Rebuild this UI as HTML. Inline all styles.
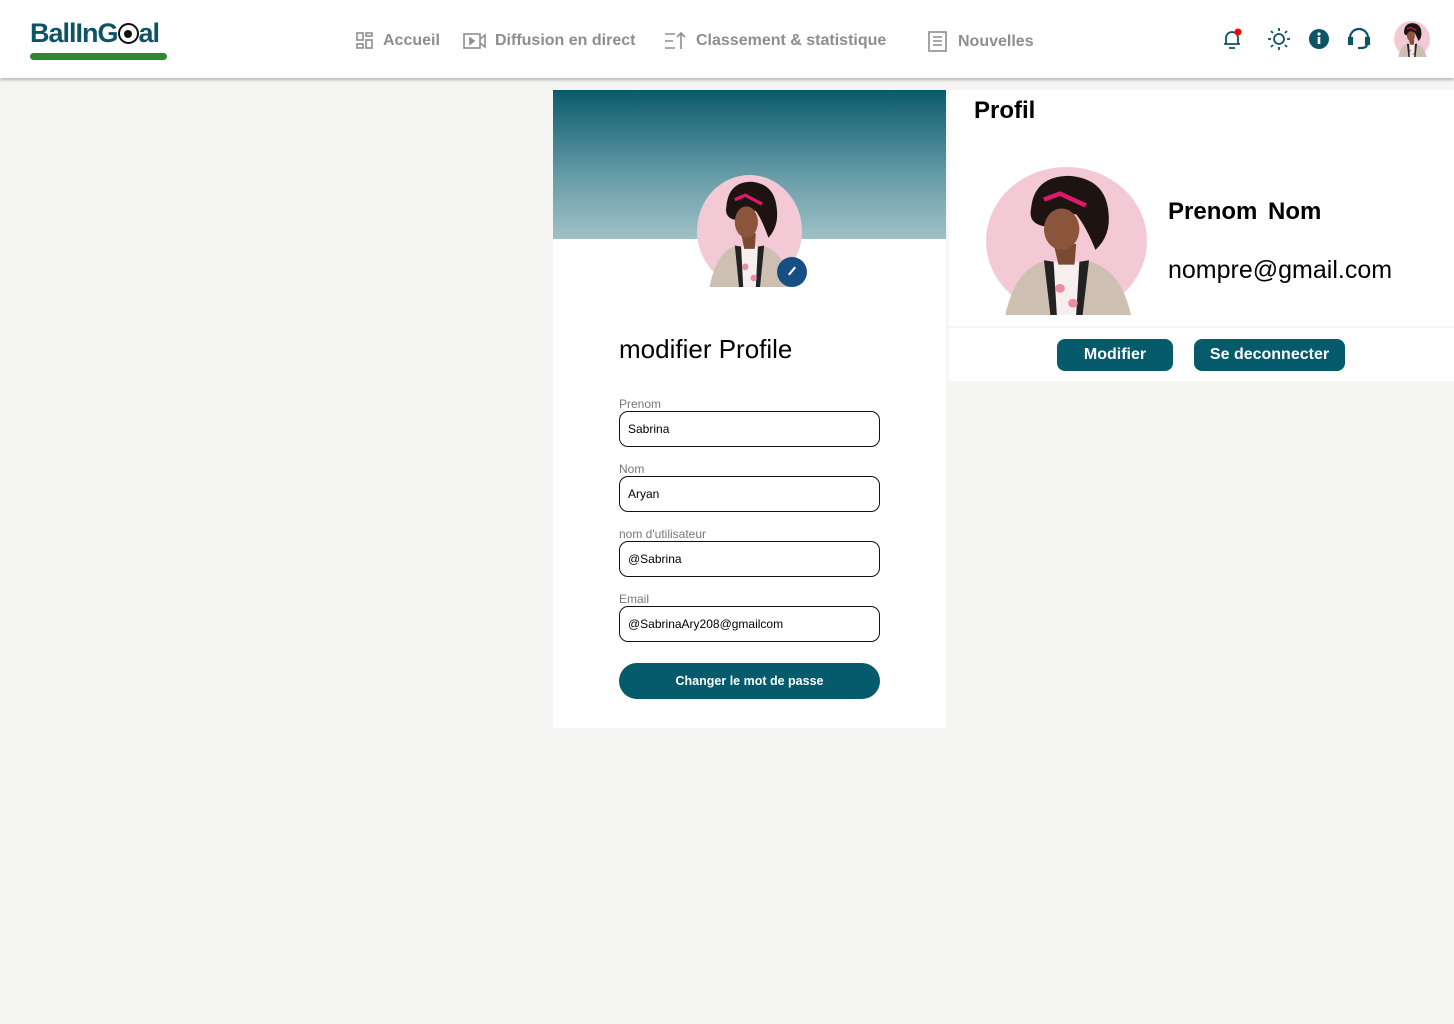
<!DOCTYPE html>
<html><head><meta charset="utf-8"><style>
*{margin:0;padding:0;box-sizing:border-box}
body{width:1454px;height:1024px;background:#f5f5f3;font-family:"Liberation Sans",sans-serif;position:relative;overflow:hidden}
.hdr{position:absolute;left:0;top:0;width:1454px;height:78px;background:#fff;box-shadow:0 2px 3px rgba(0,0,0,.25)}
.logo{position:absolute;left:30px;top:18px;font-size:27px;font-weight:bold;color:#0d5466;letter-spacing:-1px}
.bar{position:absolute;left:30px;top:53px;width:137px;height:7px;border-radius:4px;background:#2b8a2b}
.nav{position:absolute;top:31px;font-size:16px;font-weight:bold;color:#8e8e8e;display:flex;align-items:center;gap:8px}
.abs{position:absolute}
.lbl{position:absolute;left:619px;font-size:12px;color:#777}
.inp{position:absolute;left:619px;width:261px;height:36px;border:1.3px solid #111;border-radius:9px;font-size:12px;color:#000;padding:10px 0 0 8px}
.btn{position:absolute;background:#055a6b;color:#fff;font-weight:bold;text-align:center}
</style></head><body>
<svg width="0" height="0" style="position:absolute"><defs>
<symbol id="av" viewBox="0 0 100 100" preserveAspectRatio="none">
<circle cx="50" cy="50" r="50" fill="#f4c9d6"/>
<path d="M12 100 Q18 70 35 64 L65 64 Q84 70 90 100Z" fill="#cdbfb2"/>
<path d="M38 64 L62 64 L58 100 L42 100Z" fill="#f7eef0"/>
<path d="M36 63 L42 64 L44 100 L40 100Z M64 63 L58 64 L56 100 L60 100Z" fill="#222"/>
<circle cx="46" cy="82" r="3" fill="#e88fa3"/><circle cx="54" cy="92" r="3" fill="#e88fa3"/>
<path d="M42 52 L56 52 L55 66 L45 66Z" fill="#7a4a33"/>
<path d="M28 28 Q30 6 52 6 Q74 8 76 30 Q78 46 68 56 Q62 40 56 32 Q44 30 36 40 Q26 38 28 28Z" fill="#1d1412"/>
<ellipse cx="47" cy="42" rx="11" ry="14" fill="#8a553b"/>
<path d="M36 22 L46 18 L62 26" stroke="#e0186b" stroke-width="3" fill="none"/>
</symbol></defs></svg>

<div class="hdr">
<div class="logo">BallInG<span style="display:inline-block;width:21px;height:21px;border-radius:50%;background:#fff;border:2px solid #111;vertical-align:-2px;position:relative"><span style="position:absolute;left:4.5px;top:4.5px;width:8px;height:8px;background:#111;border-radius:50%"></span></span>al</div>
<div class="bar"></div>
<div class="nav" style="left:355px"><svg width="20" height="20" viewBox="0 0 20 20" fill="none" stroke="#8e8e8e" stroke-width="1.6"><rect x="2" y="2" width="6" height="7"/><rect x="11" y="2" width="6" height="3"/><rect x="2" y="13" width="6" height="4"/><rect x="11" y="9" width="6" height="8"/></svg>Accueil</div>
<div class="nav" style="left:463px"><svg width="24" height="20" viewBox="0 0 24 20" fill="none" stroke="#8e8e8e" stroke-width="1.6"><rect x="1" y="3" width="16" height="14"/><path d="M7 7l4 3-4 3z" fill="#8e8e8e"/><path d="M17 8l5-4v12l-5-4"/></svg>Diffusion en direct</div>
<div class="nav" style="left:664px;gap:10px"><svg width="22" height="20" viewBox="0 0 22 20" fill="none" stroke="#8e8e8e" stroke-width="1.6"><path d="M1 3h10M1 10h8M1 17h10M17 18V2M13 6l4-4 4 4"/></svg>Classement &amp; statistique</div>
<div class="nav" style="left:928px;gap:11px"><svg width="19" height="21" viewBox="0 0 19 21" fill="none" stroke="#8e8e8e" stroke-width="1.6"><rect x="1" y="1" width="17" height="19"/><path d="M5 6h9M5 10h9M5 14h9"/></svg>Nouvelles</div>
<svg class="abs" style="left:1220px;top:27px" width="24" height="24" viewBox="0 0 24 24" fill="none" stroke="#0d5466" stroke-width="1.8"><path d="M4 17h16M6 17V11a6 6 0 0 1 12 0v6M9 21h6"/><circle cx="18" cy="5" r="3.5" fill="#f00" stroke="none"/></svg>
<svg class="abs" style="left:1267px;top:27px" width="24" height="24" viewBox="0 0 24 24" fill="none" stroke="#0d5466" stroke-width="1.8"><circle cx="12" cy="12" r="5"/><path d="M12 1v3M12 20v3M1 12h3M20 12h3M4 4l2 2M18 18l2 2M4 20l2-2M18 6l2-2"/></svg>
<svg class="abs" style="left:1308px;top:28px" width="22" height="22" viewBox="0 0 22 22"><circle cx="11" cy="11" r="10" fill="#0d5466"/><rect x="9.7" y="9" width="2.6" height="7" fill="#fff"/><circle cx="11" cy="6" r="1.6" fill="#fff"/></svg>
<svg class="abs" style="left:1346px;top:27px" width="26" height="24" viewBox="0 0 26 24" fill="none" stroke="#0d5466" stroke-width="2.2"><path d="M4 14v-3a9 9 0 0 1 18 0v3"/><rect x="3" y="11" width="3" height="6" fill="#0d5466"/><rect x="20" y="11" width="3" height="6" fill="#0d5466"/><path d="M21 17q0 4-6 4h-3"/></svg>
<svg class="abs" style="left:1394px;top:21px" width="36" height="36"><use href="#av" width="36" height="36"/></svg>
</div>

<div class="abs" style="left:553px;top:90px;width:393px;height:638px;background:#fff"></div>
<div class="abs" style="left:553px;top:90px;width:393px;height:149px;background:linear-gradient(#0a5a6c,#6a9ea9 60%,#9fc1c6)"></div>
<svg class="abs" style="left:697px;top:175px" width="105" height="112"><use href="#av" width="105" height="112"/></svg>
<div class="abs" style="left:777px;top:257px;width:30px;height:30px;border-radius:50%;background:#164f83"><div style="position:absolute;left:14px;top:9px;width:2px;height:10px;background:#fff;transform:rotate(40deg)"></div></div>
<div class="abs" style="left:619px;top:334px;font-size:26px;color:#000">modifier Profile</div>
<div class="lbl" style="top:397px">Prenom</div><div class="inp" style="top:411px">Sabrina</div>
<div class="lbl" style="top:462px">Nom</div><div class="inp" style="top:476px">Aryan</div>
<div class="lbl" style="top:527px">nom d'utilisateur</div><div class="inp" style="top:541px">@Sabrina</div>
<div class="lbl" style="top:592px">Email</div><div class="inp" style="top:606px">@SabrinaAry208@gmailcom</div>
<div class="btn" style="left:619px;top:663px;width:261px;height:36px;border-radius:18px;font-size:12.5px;line-height:36px">Changer le mot de passe</div>

<div class="abs" style="left:949px;top:90px;width:505px;height:236px;background:#fff"></div>
<div class="abs" style="left:949px;top:328px;width:505px;height:53px;background:#fff"></div>
<div class="abs" style="left:974px;top:97px;font-size:24px;font-weight:bold;color:#000">Profil</div>
<svg class="abs" style="left:986px;top:167px" width="161" height="148"><use href="#av" width="161" height="148"/></svg>
<div class="abs" style="left:1168px;top:198px;font-size:24px;font-weight:bold;color:#000;word-spacing:4px">Prenom Nom</div>
<div class="abs" style="left:1168px;top:256px;font-size:25px;color:#000">nompre@gmail.com</div>
<div class="btn" style="left:1057px;top:339px;width:116px;height:32px;border-radius:8px;font-size:16px;line-height:32px">Modifier</div>
<div class="btn" style="left:1194px;top:339px;width:151px;height:32px;border-radius:8px;font-size:16px;line-height:32px">Se deconnecter</div>
</body></html>
